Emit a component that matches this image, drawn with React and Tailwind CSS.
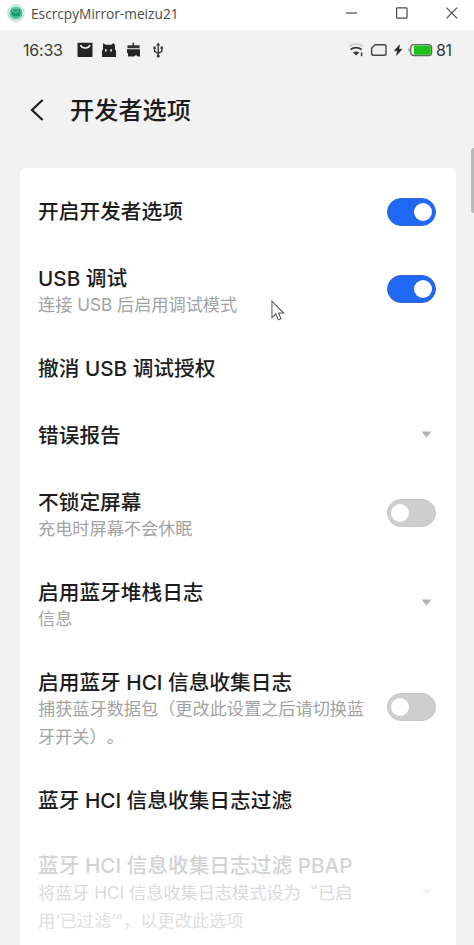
const ROWS = [
  { title: '开启开发者选项', control: 'on' },
  { title: 'USB 调试', lines: ['连接 USB 后启用调试模式'], control: 'on' },
  { title: '撤消 USB 调试授权' },
  { title: '错误报告', control: 'menu' },
  { title: '不锁定屏幕', lines: ['充电时屏幕不会休眠'], control: 'off' },
  { title: '启用蓝牙堆栈日志', lines: ['信息'], control: 'menu' },
  {
    title: '启用蓝牙 HCI 信息收集日志',
    lines: ['捕获蓝牙数据包（更改此设置之后请切换蓝', '牙开关）。'],
    control: 'off',
  },
  { title: '蓝牙 HCI 信息收集日志过滤' },
  {
    title: '蓝牙 HCI 信息收集日志过滤 PBAP',
    lines: [
      <>将蓝牙 HCI 信息收集日志模式设为<span className="font-['Noto_Sans_CJK_SC',sans-serif]">“</span>已启</>,
      '用‘已过滤’”，以更改此选项',
    ],
    control: 'menu',
    disabled: true,
  },
]

function TitleBar() {
  return (
    <header className="flex h-[30px] shrink-0 items-center bg-white pb-1 pl-[7px] pr-4">
      <svg className="h-[18px] w-[18px]" viewBox="0 0 18 18" fill="none">
        <circle cx="9" cy="9" r="8.2" fill="#f2fbf7" stroke="#9ad6c0" />
        <circle cx="9" cy="9" r="6.6" fill="#5cc79d" />
        <path d="M4.4 5.6h9v5.6L11 12.600H6.800l-2.400-2z" fill="#12986a" />
        <path d="M5 6.400l3.600 2.200 3-1.600" stroke="#9fe0c5" strokeWidth="0.900" />
      </svg>
      <span className="ml-1.5 pt-px font-['Open_Sans',sans-serif] text-[13.7px] leading-none text-[#4a4a4a]">
        EscrcpyMirror-meizu21
      </span>
      <svg className="ml-auto h-3 w-28" viewBox="0 0 112 12" fill="none" stroke="#484848" strokeWidth="1.2">
        <path d="M0 6h11" />
        <rect x="50.6" y="0.8" width="10.4" height="10.4" rx="0.8" />
        <path d="M100.5 0.7l10.6 10.6M111.1 0.7L100.5 11.3" />
      </svg>
    </header>
  )
}

function StatusBar() {
  return (
    <div className="flex h-[40px] items-center pl-[23px] pr-[21px] text-[#3a3a3a]">
      <span className="w-[54px] text-[16px] tracking-[-0.2px]">16:33</span>
      {/* Notification icons: mail, android, app, usb */}
      <svg className="h-4 w-[88px]" viewBox="0 0 88 16" fill="none">
        <rect x="0.5" y="0.8" width="15" height="14.2" rx="0.8" fill="#242424" />
        <path d="M3.5 3c1 3.400 8 4.600 9.400 0" stroke="#f2f2f2" strokeWidth="1.500" />
        <path d="M26.300 1l2.200 1.800h6L36.700 1l1.300 2.500V7.500l1 1V15H25V8.500l1-1V3.500z" fill="#242424" />
        <path d="M28.800 7.200v2.400M34.200 7.200v2.400" stroke="#f2f2f2" strokeWidth="1.700" />
        <path d="M50.500 3.200h5V.800h1.600v2.400h5.400v3H50.500z" fill="#333" />
        <path d="M50 7.200h13v7.300h-2.200L59 13l-2 1.500h-6V11h-1z" fill="#242424" />
        <path d="M81.200 2v12.500M77.600 5.500v3.800l3.600 2.200 3.600-2.200V5.500" stroke="#3a3a3a" strokeWidth="1.400" />
        <path d="M79.200 3.600l2-3 2 3z" fill="#3a3a3a" />
        <path d="M76.400 4.500h2.400v2.500h-2.400zM83.600 4.500H86v2.500h-2.400z" fill="#3a3a3a" />
        <circle cx="81.200" cy="14" r="1.600" fill="#3a3a3a" />
      </svg>
      <svg className="ml-auto h-4 w-[86px]" viewBox="0 0 86 16" fill="none">
        <path d="M0.800 4.600C5 .900 11.200 .900 15.400 4.600" stroke="#c4c4c4" strokeWidth="1.300" />
        <path d="M2.600 7.600c3.200-2.600 7.800-2.600 11 0" stroke="#3d3d3d" strokeWidth="1.900" />
        <path d="M4.800 10.600c2-1.600 4.600-1.600 6.600 0L8.100 13.400z" fill="#3d3d3d" />
        <path d="M13.600 10.500v3.700" stroke="#3d3d3d" strokeWidth="1.500" />
        <path d="M27 2.800h9.200a1.800 1.800 0 0 1 1.800 1.800v6.800a1.800 1.800 0 0 1-1.800 1.800H25.400a1.800 1.800 0 0 1-1.800-1.800V6.200z" stroke="#444" strokeWidth="1.400" />
        <path d="M51.600 2.800l-5.200 6h3.200L48.400 13.400l5.600-6.200h-3.200z" fill="#222" stroke="#222" strokeWidth="0.500" />
        <rect x="62.800" y="2.700" width="20.800" height="10.800" rx="3" fill="#fff" stroke="#5b6a5b" strokeWidth="1.300" />
        <path d="M66 3.500h15.200a1.600 1.600 0 0 1 1.600 1.600v6a1.600 1.600 0 0 1-1.600 1.600H66z" fill="#1fc11f" />
        <path d="M61 6.500v3" stroke="#999" strokeWidth="1.400" />
      </svg>
      <span className="ml-[2px] w-[17px] text-[16px] tracking-[-0.4px]">81</span>
    </div>
  )
}

function Toggle({ on }) {
  return (
    <span
      className={`flex h-7 w-[49px] items-center rounded-full border px-[3px] ${
        on ? 'justify-end border-[#3468d4] bg-[#1f68f5]' : 'justify-start border-[#c7c7c7] bg-[#cecece]'
      }`}
    >
      <span className="h-[18px] w-[18px] rounded-full bg-white" />
    </span>
  )
}

function MenuArrow({ disabled }) {
  return (
    <svg
      className={`mr-1 h-[7px] w-[11px] ${disabled ? 'text-[#f1f1f1]' : 'text-[#b4b4b4]'}`}
      viewBox="0 0 11 7"
      fill="currentColor"
    >
      <path d="M0.500 0.500h10L5.500 6.500z" />
    </svg>
  )
}

function SettingRow({ title, lines = [], control, disabled }) {
  const single = lines.length === 0
  const isToggle = control === 'on' || control === 'off'

  return (
    <li className="flex items-start justify-between pl-[18px] pr-5">
      <div className={`shrink-0 whitespace-nowrap ${disabled ? 'pb-[18px] pt-5' : 'pb-4 pt-[22px]'}`}>
        <p className={`text-[20.7px] font-medium leading-6 ${disabled ? 'text-[#d3d3d3]' : 'text-[#1c1c1c]'}`}>
          {title}
        </p>
        {lines.map((line, i) => (
          <p
            key={i}
            className={`text-[17.2px] leading-7 tracking-[-0.02px] ${disabled ? (i === 0 ? 'text-[#dadada]' : 'text-[#e0e0e0]') : 'text-[#a3a3a3]'}`}
          >
            {line}
          </p>
        ))}
        {single && <div className="h-[5px]" />}
      </div>
      <div className={`flex items-center self-stretch ${single && isToggle ? 'pb-0' : 'pb-[3px]'}`}>
        {isToggle && <Toggle on={control === 'on'} />}
        {control === 'menu' && <MenuArrow disabled={disabled} />}
      </div>
    </li>
  )
}

export default function App() {
  return (
    <div className="relative flex h-[945px] w-[474px] flex-col overflow-hidden bg-[#f2f2f2] font-[Inter,'Noto_Sans_CJK_SC',sans-serif] [text-spacing-trim:space-all]">
      <TitleBar />
      <StatusBar />
      <div className="flex h-[98px] shrink-0 items-start pl-[30px] pt-[22px]">
        <svg className="mt-1.5 h-6 w-[14px]" viewBox="0 0 14 24" fill="none" stroke="#1d1d1d" strokeWidth="2.200">
          <path d="M12.600 2L2 12l10.600 10" />
        </svg>
        <h1 className="ml-[26px] pt-px text-[24.2px] font-medium leading-9 text-[#1c1c1c]">开发者选项</h1>
      </div>
      <ul className="ml-5 w-[436px] flex-1 overflow-hidden rounded-t-md bg-white pt-[10px]">
        {ROWS.map((row) => (
          <SettingRow key={row.title} {...row} />
        ))}
      </ul>

      {/* Scroll thumb and mouse pointer sit over the window */}
      <span className="absolute right-0 top-[148px] h-[65px] w-[3px] rounded-l-sm bg-[#b9b9b9]" />
      <svg className="absolute left-[271px] top-[300px] h-[22px] w-[14px]" viewBox="0 0 15 23" fill="#fff" stroke="#555" strokeWidth="1.100">
        <path d="M1 1v17.500l4.200-3.800 2.600 6.300 2.900-1.200-2.600-6.100h5.500z" />
      </svg>
    </div>
  )
}
